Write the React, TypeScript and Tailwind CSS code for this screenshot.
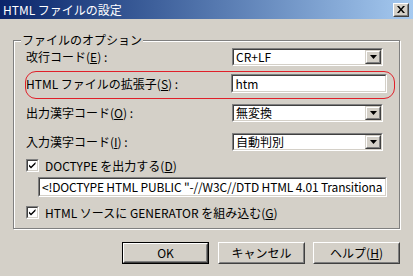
import type { ReactNode } from "react";

const font = { fontFamily: '"Noto Sans CJK JP", "Liberation Sans", sans-serif' };

function Sunken({ className = "", children }: { className?: string; children?: ReactNode }) {
  return (
    <div className={`border border-t-[#808080] border-l-[#808080] border-b-white border-r-white ${className}`}>
      <div className="h-full border border-t-[#404040] border-l-[#404040] border-b-[#d4d0c8] border-r-[#d4d0c8] bg-white flex items-center overflow-hidden">
        {children}
      </div>
    </div>
  );
}

function Combo({ value }: { value: string }) {
  return (
    <Sunken className="w-[151px] h-[18px]">
      <span className="pl-[2px] flex-1 leading-[14px] whitespace-nowrap">{value}</span>
      <div className="w-[16px] h-full border border-t-[#d4d0c8] border-l-[#d4d0c8] border-b-[#404040] border-r-[#404040] bg-[#d4d0c8]">
        <div className="h-full border border-t-white border-l-white border-b-[#808080] border-r-[#808080] flex items-center justify-center">
          <svg width="7" height="4" viewBox="0 0 7 4">
            <path d="M0 0h7L3.5 4z" fill="#000" />
          </svg>
        </div>
      </div>
    </Sunken>
  );
}

function Check({ children }: { children: ReactNode }) {
  return (
    <div className="flex items-center h-[13px]">
      <Sunken className="w-[13px] h-[13px]">
        <svg width="9" height="9" viewBox="0 0 9 9">
          <path d="M1 3.5l2 2 4.5-4.5v2l-4.5 4.5-2-2z" fill="#000" />
        </svg>
      </Sunken>
      <span className="ml-[6px] leading-[14px] whitespace-nowrap">{children}</span>
    </div>
  );
}

function Button({ label, isDefault = false }: { label: ReactNode; isDefault?: boolean }) {
  return (
    <div className={`w-[87px] h-[22px] ${isDefault ? "border border-black" : ""}`}>
      <div className="h-full border border-t-white border-l-white border-b-[#404040] border-r-[#404040]">
        <div className="h-full border border-t-[#d4d0c8] border-l-[#d4d0c8] border-b-[#808080] border-r-[#808080] flex items-center justify-center leading-[14px]">
          {label}
        </div>
      </div>
    </div>
  );
}

export default function App() {
  return (
    <div className="w-[413px] h-[276px] bg-[#d4d0c8] overflow-hidden text-[12px] text-black" style={font}>
      {/* title bar */}
      <div className="h-[19px] flex items-center pl-[3px] pr-[4px] bg-gradient-to-r from-[#0a246a] to-[#a6caf0]">
        <span className="text-white leading-[14px]">HTML ファイルの設定</span>
        <div className="ml-auto w-[16px] h-[14px] border border-t-white border-l-white border-b-[#404040] border-r-[#404040] bg-[#d4d0c8]">
          <div className="h-full border border-t-[#d4d0c8] border-l-[#d4d0c8] border-b-[#808080] border-r-[#808080] flex items-center justify-center">
            <svg width="8" height="7" viewBox="0 0 8 7">
              <path d="M0 0h2l2 2.5L6 0h2L5 3.5 8 7H6L4 4.5 2 7H0l3-3.5z" fill="#000" />
            </svg>
          </div>
        </div>
      </div>

      <div className="px-[13px] pt-[21px]">
        <div className="relative h-[189px] border border-[#808080] shadow-[inset_1px_1px_0_#fff,1px_1px_0_#fff] px-[12px] pt-[7px]">
          <span className="absolute -top-[8px] left-[7px] px-[1px] bg-[#d4d0c8] leading-[14px]">ファイルのオプション</span>
          {/* red highlight */}
          <div className="absolute top-[30px] left-[11px] w-[370px] h-[28px] border border-[#e0202a] rounded-[11px]" />

          <div className="flex items-center">
            <span className="w-[206px] leading-[14px]">改行コード(<u>E</u>) :</span>
            <Combo value="CR+LF" />
          </div>

          <div className="flex items-center mt-[8px]">
            <span className="w-[206px] leading-[14px]">HTML ファイルの拡張子(<u>S</u>) :</span>
            <Sunken className="w-[156px] h-[19px]">
              <span className="pl-[2px] leading-[14px]">htm</span>
            </Sunken>
          </div>

          <div className="flex items-center mt-[11px]">
            <span className="w-[206px] leading-[14px]">出力漢字コード(<u>O</u>) :</span>
            <Combo value="無変換" />
          </div>

          <div className="flex items-center mt-[11px]">
            <span className="w-[206px] leading-[14px]">入力漢字コード(<u>I</u>) :</span>
            <Combo value="自動判別" />
          </div>

          <div className="mt-[8px]">
            <Check>
              DOCTYPE を出力する(<u>D</u>)
            </Check>
          </div>

          <Sunken className="mt-[5px] ml-[12px] w-[349px] h-[20px]">
            <span className="pl-[2px] leading-[14px] whitespace-nowrap tracking-[-0.15px]">
              &lt;!DOCTYPE HTML PUBLIC "-//W3C//DTD HTML 4.01 Transitiona
            </span>
          </Sunken>

          <div className="mt-[9px]">
            <Check>
              HTML ソースに GENERATOR を組み込む(<u>G</u>)
            </Check>
          </div>
        </div>
      </div>

      <div className="flex justify-end pr-[13px] mt-[13px]">
        <Button label="OK" isDefault />
        <div className="ml-[9px]">
          <Button label="キャンセル" />
        </div>
        <div className="ml-[8px]">
          <Button label={<>ヘルプ(<u>H</u>)</>} />
        </div>
      </div>
    </div>
  );
}
